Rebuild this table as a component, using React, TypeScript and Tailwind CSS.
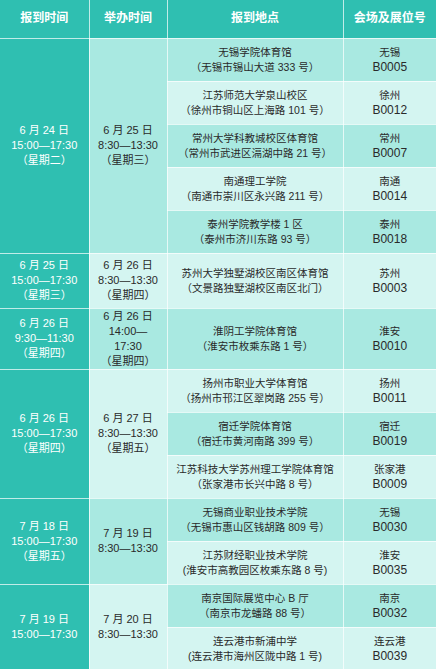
import React from 'react'

type Venue = { name: string; addr: string; city: string; code: string }
type Group = { reg: string[]; hold: string[]; h: number; venues: Venue[] }

const groups: Group[] = [
  {
    reg: ['6 月 24 日', '15:00—17:30', '（星期二）'],
    hold: ['6 月 25 日', '8:30—13:30', '（星期三）'],
    h: 43,
    venues: [
      { name: '无锡学院体育馆', addr: '（无锡市锡山大道 333 号）', city: '无锡', code: 'B0005' },
      { name: '江苏师范大学泉山校区', addr: '（徐州市铜山区上海路 101 号）', city: '徐州', code: 'B0012' },
      { name: '常州大学科教城校区体育馆', addr: '（常州市武进区滆湖中路 21 号）', city: '常州', code: 'B0007' },
      { name: '南通理工学院', addr: '（南通市崇川区永兴路 211 号）', city: '南通', code: 'B0014' },
      { name: '泰州学院教学楼 1 区', addr: '（泰州市济川东路 93 号）', city: '泰州', code: 'B0018' },
    ],
  },
  {
    reg: ['6 月 25 日', '15:00—17:30', '（星期三）'],
    hold: ['6 月 26 日', '8:30—13:30', '（星期四）'],
    h: 55,
    venues: [
      { name: '苏州大学独墅湖校区南区体育馆', addr: '（文景路独墅湖校区南区北门）', city: '苏州', code: 'B0003' },
    ],
  },
  {
    reg: ['6 月 26 日', '9:30—11:30', '（星期四）'],
    hold: ['6 月 26 日', '14:00—', '17:30', '（星期四）'],
    h: 60,
    venues: [
      { name: '淮阴工学院体育馆', addr: '（淮安市枚乘东路 1 号）', city: '淮安', code: 'B0010' },
    ],
  },
  {
    reg: ['6 月 26 日', '15:00—17:30', '（星期四）'],
    hold: ['6 月 27 日', '8:30—13:30', '（星期五）'],
    h: 43,
    venues: [
      { name: '扬州市职业大学体育馆', addr: '（扬州市邗江区翠岗路 255 号）', city: '扬州', code: 'B0011' },
      { name: '宿迁学院体育馆', addr: '（宿迁市黄河南路 399 号）', city: '宿迁', code: 'B0019' },
      { name: '江苏科技大学苏州理工学院体育馆', addr: '（张家港市长兴中路 8 号）', city: '张家港', code: 'B0009' },
    ],
  },
  {
    reg: ['7 月 18 日', '15:00—17:30', '（星期五）'],
    hold: ['7 月 19 日', '8:30—13:30'],
    h: 43,
    venues: [
      { name: '无锡商业职业技术学院', addr: '（无锡市惠山区钱胡路 809 号）', city: '无锡', code: 'B0030' },
      { name: '江苏财经职业技术学院', addr: '(淮安市高教园区枚乘东路 8 号)', city: '淮安', code: 'B0035' },
    ],
  },
  {
    reg: ['7 月 19 日', '15:00—17:30'],
    hold: ['7 月 20 日', '8:30—13:30'],
    h: 43,
    venues: [
      { name: '南京国际展览中心 B 厅', addr: '（南京市龙蟠路 88 号）', city: '南京', code: 'B0032' },
      { name: '连云港市新浦中学', addr: '(连云港市海州区陇中路 1 号)', city: '连云港', code: 'B0039' },
    ],
  },
]

const cell = 'border border-white/70 p-0 text-center align-middle'

export default function App() {
  let rowIndex = 0
  return (
    <div className="w-[436px] h-[669px] overflow-hidden bg-[#a9e9e1] font-['Liberation_Sans','Noto_Sans_CJK_SC',sans-serif]">
      <table className="w-[436px] table-fixed border-collapse border-hidden text-[11px] leading-[15px]">
        <colgroup>
          <col className="w-[89px]" />
          <col className="w-[78px]" />
          <col className="w-[176px]" />
          <col className="w-[93px]" />
        </colgroup>
        <thead>
          <tr className="h-[38px] bg-[#2fbfb1] text-[12px] font-bold text-white">
            <th className={cell}>报到时间</th>
            <th className={cell}>举办时间</th>
            <th className={cell}>报到地点</th>
            <th className={cell}>会场及展位号</th>
          </tr>
        </thead>
        <tbody>
          {groups.map((g, gi) =>
            g.venues.map((v, vi) => {
              const light = rowIndex++ % 2 === 1
              return (
                <tr key={`${gi}-${vi}`} style={{ height: g.h }}>
                  {vi === 0 && (
                    <>
                      <td rowSpan={g.venues.length} className={`${cell} bg-[#2fbfb1] text-white`}>
                        {g.reg.map((t) => (
                          <div key={t}>{t}</div>
                        ))}
                      </td>
                      <td
                        rowSpan={g.venues.length}
                        className={`${cell} text-[#2a2a2a] ${gi % 2 === 0 ? 'bg-[#a9e9e1]' : 'bg-[#d4f5f1]'}`}
                      >
                        {g.hold.map((t, i) => (
                          <div key={i}>{t}</div>
                        ))}
                      </td>
                    </>
                  )}
                  <td className={`${cell} text-[10.5px] text-[#2a2a2a] ${light ? 'bg-[#d4f5f1]' : 'bg-[#a9e9e1]'}`}>
                    <div>{v.name}</div>
                    <div>{v.addr}</div>
                  </td>
                  <td className={`${cell} text-[#2a2a2a] ${light ? 'bg-[#d4f5f1]' : 'bg-[#a9e9e1]'}`}>
                    <div className="text-[10.5px]">{v.city}</div>
                    <div className="text-[12px]">{v.code}</div>
                  </td>
                </tr>
              )
            })
          )}
        </tbody>
      </table>
    </div>
  )
}
